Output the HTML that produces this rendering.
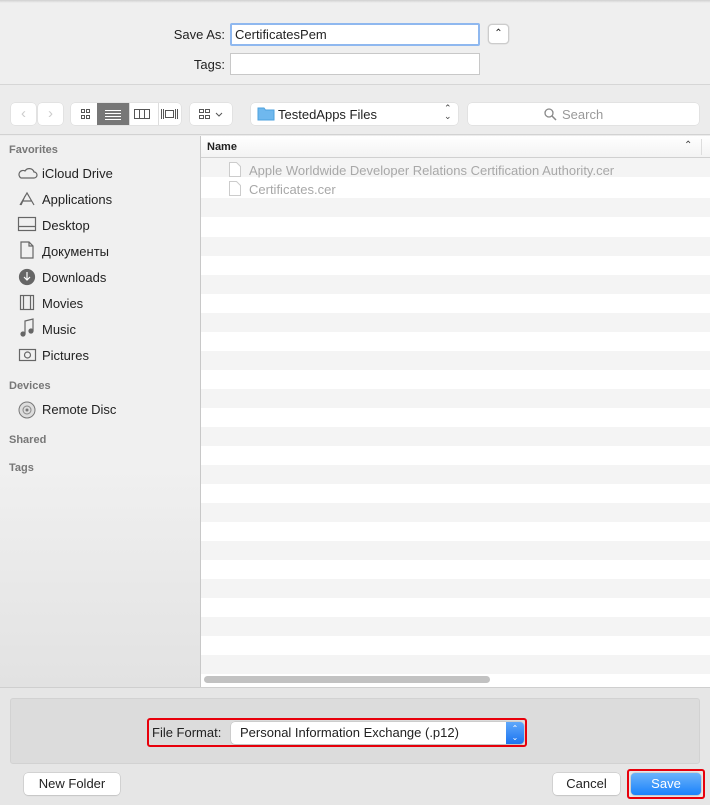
<!DOCTYPE html>
<html><head><meta charset="utf-8"><style>
*{box-sizing:border-box;margin:0;padding:0}
body{width:710px;height:805px;position:relative;overflow:hidden;font-family:"Liberation Sans",Arial,sans-serif;font-size:13px;color:#222;background:#ececec}
.abs{position:absolute}
.top{left:0;top:0;width:710px;height:85px;background:#efefef;border-bottom:1px solid #d6d6d6}
.topshadow{left:0;top:0;width:710px;height:3px;background:linear-gradient(#d0d0d0,#efefef)}
.lbl{font-size:13px;text-align:right}
.field{background:#fff;border:1px solid #c8c8c8;height:22px;padding:3px 4px;font-size:13px}
.tb{left:0;top:86px;width:710px;height:49px;background:#ececec;border-bottom:1px solid #d2d2d2}
.btn{background:#fff;border-radius:4px;box-shadow:0 0 0 .5px #d8d8d8;height:22px}
.side{left:0;top:136px;width:200px;height:551px;background:linear-gradient(#f0f0f0 60%,#e2e2e2)}
.sh{left:9px;font-size:11px;font-weight:bold;color:#777}
.si{left:42px;font-size:13px;color:#222}
.ic{left:18px;width:17px;height:15px}
.list{left:200px;top:136px;width:510px;height:551px;background:#fff;border-left:1px solid #c8c8c8}
.row{position:absolute;left:0;width:510px;height:19px;background:#f4f4f4}
.bottom{left:0;top:687px;width:710px;height:118px;background:#e6e6e6;border-top:1px solid #cfcfcf}
.pb{background:#fff;border-radius:4px;box-shadow:0 0 0 .5px #bdbdbd,0 1px 1px rgba(0,0,0,.1);height:22px;text-align:center;line-height:22px;font-size:13px}
</style></head><body>
<div class="abs top"></div><div class="abs topshadow"></div>
<div class="abs lbl" style="left:150px;top:27px;width:75px">Save As:</div>
<div class="abs field" style="left:230px;top:23px;width:250px;height:23px;border:2px solid #8fb8ef;border-radius:2px;padding:2px 3px">CertificatesPem</div>
<div class="abs btn" style="left:488px;top:24px;width:21px;height:20px;text-align:center;font-size:10px;line-height:18px;border:1px solid #ccc">&#8963;</div>
<div class="abs lbl" style="left:150px;top:57px;width:75px">Tags:</div>
<div class="abs field" style="left:230px;top:53px;width:250px;height:22px"></div>

<div class="abs tb"></div>
<div class="abs btn" style="left:11px;top:103px;width:25px;color:#ccc;text-align:center;line-height:22px;font-size:15px">&#8249;</div>
<div class="abs btn" style="left:38px;top:103px;width:25px;color:#ccc;text-align:center;line-height:22px;font-size:15px">&#8250;</div>
<div class="abs btn" style="left:71px;top:103px;width:110px"></div>
<svg class="abs" style="left:71px;top:103px" width="110" height="22">
<g fill="none" stroke="#555"><rect x="10.5" y="6.5" width="3" height="3"/><rect x="15.5" y="6.5" width="3" height="3"/><rect x="10.5" y="12.5" width="3" height="3"/><rect x="15.5" y="12.5" width="3" height="3"/></g>
<rect x="26" y="0" width="32" height="22" fill="#777"/>
<g stroke="#fff"><path d="M34 7.5h16M34 10.5h16M34 13.5h16M34 16.5h16"/></g>
<path d="M58.5 0v22M87.5 0v22" stroke="#ddd"/>
<g fill="none" stroke="#555"><rect x="63.5" y="6.5" width="15" height="9"/><path d="M68.5 6.5v9M73.5 6.5v9"/>
<path d="M90.5 6v10M92.5 6v10M104.5 6v10M106.5 6v10"/><rect x="94.5" y="7.5" width="8" height="7"/></g>
</svg>
<div class="abs btn" style="left:190px;top:103px;width:42px"></div>
<svg class="abs" style="left:190px;top:103px" width="42" height="22"><g fill="none" stroke="#555"><path d="M9.5 6.5h4v3h-4zM15.5 6.5h4v3h-4zM9.5 12.5h4v3h-4zM15.5 12.5h4v3h-4z"/><path d="M26 10l3 3 3-3"/></g></svg>
<div class="abs btn" style="left:251px;top:103px;width:207px"></div>
<svg class="abs" style="left:257px;top:106px" width="18" height="15"><path d="M1 2h6l1.5 2H17v10H1z" fill="#6fb8ee" stroke="#4ea2de"/></svg>
<div class="abs" style="left:278px;top:107px;font-size:13px">TestedApps Files</div>
<div class="abs" style="left:444px;top:104px;font-size:9px;line-height:8px;color:#444">&#8963;<br>&#8964;</div>
<div class="abs btn" style="left:468px;top:103px;width:231px"></div>
<svg class="abs" style="left:544px;top:108px" width="13" height="13"><circle cx="5" cy="5" r="4" fill="none" stroke="#888" stroke-width="1.3"/><path d="M8 8l4 4" stroke="#888" stroke-width="1.5"/></svg>
<div class="abs" style="left:562px;top:107px;color:#999">Search</div>

<div class="abs side"></div>
<div class="abs sh" style="top:144px">Favorites</div>
<svg class="abs" style="left:17px;top:164px" width="22" height="200" fill="none" stroke="#666" stroke-width="1.2">
<path d="M4 14h13a3 3 0 0 0 0-6 5 5 0 0 0-9-1 3.5 3.5 0 0 0-4 7z"/>
<path d="M3 41l7-12 7 12M5 37h10M8 32l-4 9"/>
<rect x="1.5" y="53.5" width="17" height="13"/><path d="M1.5 62.5h17"/>
<path d="M4 78h8l4 4v12H4zM12 78v4h4"/>
<circle cx="10" cy="113" r="7.5" fill="#666"/><path d="M10 108v8M7 113l3 3 3-3" stroke="#fff"/>
<rect x="3.5" y="131.5" width="13" height="14"/><path d="M6.5 131.5v14M13.5 131.5v14"/>
<path d="M8 170V157l8-2v12" /><circle cx="6" cy="170" r="2" fill="#666"/><circle cx="14" cy="167" r="2" fill="#666"/>
<rect x="2.5" y="185.5" width="16" height="11"/><circle cx="10.5" cy="191" r="3"/>
</svg>
<div class="abs si" style="top:166px">iCloud Drive</div>
<div class="abs si" style="top:192px">Applications</div>
<div class="abs si" style="top:218px">Desktop</div>
<div class="abs si" style="top:244px">Документы</div>
<div class="abs si" style="top:270px">Downloads</div>
<div class="abs si" style="top:296px">Movies</div>
<div class="abs si" style="top:322px">Music</div>
<div class="abs si" style="top:348px">Pictures</div>
<div class="abs sh" style="top:380px">Devices</div>
<svg class="abs" style="left:17px;top:400px" width="20" height="20"><circle cx="10" cy="10" r="8" fill="#ddd" stroke="#777"/><circle cx="10" cy="10" r="4" fill="none" stroke="#888"/><circle cx="10" cy="10" r="1.5" fill="#777"/></svg>
<div class="abs si" style="top:402px">Remote Disc</div>
<div class="abs sh" style="top:434px">Shared</div>
<div class="abs sh" style="top:462px">Tags</div>

<div class="abs list">
<div style="position:absolute;left:0;top:0;width:510px;height:22px;background:linear-gradient(#fff,#f3f3f3);border-bottom:1px solid #d0d0d0"></div>
<div style="position:absolute;left:6px;top:5px;font-size:11px;font-weight:bold">Name</div>
<div style="position:absolute;left:483px;top:4px;font-size:10px;color:#444">&#8963;</div>
<div style="position:absolute;left:500px;top:3px;width:1px;height:16px;background:#ddd"></div>
<div class="row" style="top:22px"></div>
<div class="row" style="top:62px"></div><div class="row" style="top:101px"></div><div class="row" style="top:139px"></div><div class="row" style="top:177px"></div><div class="row" style="top:215px"></div><div class="row" style="top:253px"></div><div class="row" style="top:291px"></div><div class="row" style="top:329px"></div><div class="row" style="top:367px"></div><div class="row" style="top:405px"></div><div class="row" style="top:443px"></div><div class="row" style="top:481px"></div><div class="row" style="top:519px"></div>
<svg style="position:absolute;left:28px;top:26px" width="12" height="36" fill="#fff" stroke="#ccc"><path d="M.5.5h7l4 4v10H.5z"/><path d="M.5 19.5h7l4 4v10H.5z"/></svg>
<div style="position:absolute;left:48px;top:27px;color:#a8a8a8">Apple Worldwide Developer Relations Certification Authority.cer</div>
<div style="position:absolute;left:48px;top:46px;color:#a8a8a8">Certificates.cer</div>
<div style="position:absolute;left:3px;top:540px;width:286px;height:7px;border-radius:4px;background:#c2c2c2"></div>
</div>

<div class="abs bottom"></div>
<div class="abs" style="left:10px;top:698px;width:690px;height:66px;background:#dcdcdc;border:1px solid #d2d2d2;border-radius:3px"></div>
<div class="abs" style="left:147px;top:718px;width:380px;height:29px;border:2px solid #e8000b;border-radius:3px"></div>
<div class="abs" style="left:152px;top:725px;font-size:13px">File Format:</div>
<div class="abs pb" style="left:231px;top:722px;width:293px;text-align:left;padding-left:9px">Personal Information Exchange (.p12)</div>
<div class="abs" style="left:506px;top:722px;width:18px;height:22px;background:linear-gradient(#5fa8fb,#1b74f0);border-radius:0 4px 4px 0;color:#fff;font-size:8px;line-height:9px;text-align:center;padding-top:2px">&#8963;<br>&#8964;</div>
<div class="abs pb" style="left:24px;top:773px;width:96px">New Folder</div>
<div class="abs pb" style="left:553px;top:773px;width:67px">Cancel</div>
<div class="abs" style="left:627px;top:769px;width:78px;height:30px;border:2px solid #e8000b;border-radius:3px"></div>
<div class="abs pb" style="left:631px;top:773px;width:70px;background:linear-gradient(#6cb3fa,#1a82fb);color:#fff">Save</div>
</body></html>
